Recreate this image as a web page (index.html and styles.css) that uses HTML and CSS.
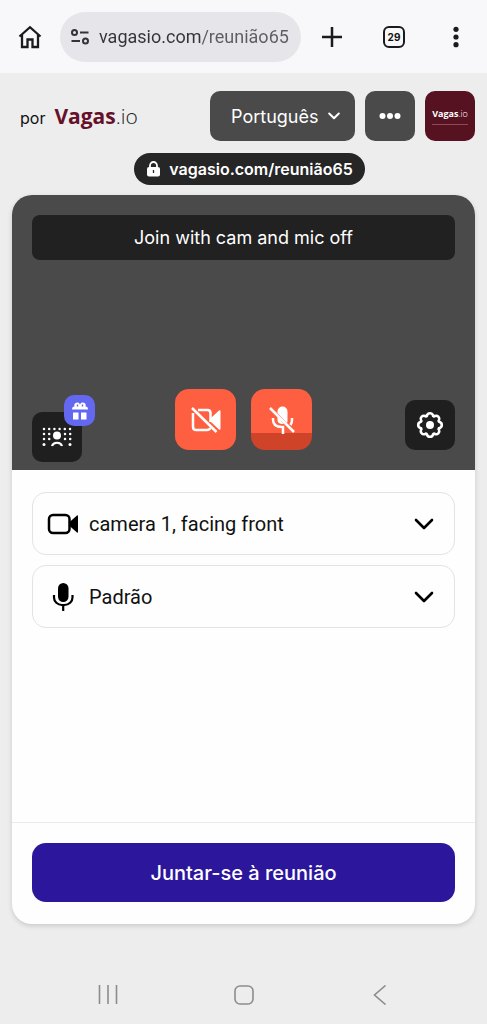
FILE: index.html
```html
<!DOCTYPE html>
<html lang="pt-BR">
<head>
<meta charset="utf-8">
<meta name="viewport" content="width=device-width, initial-scale=1">
<title>Vagas.io</title>
<link rel="stylesheet" href="styles.css">
</head>
<body>
<div class="screen">
  <header class="browser">
    <button class="browser-btn home" type="button" aria-label="Home">
      <svg width="24" height="24" viewBox="0 0 24 24" fill="none" stroke="#1b1b1d" stroke-width="2.300"><path d="M1.500 11.500 12 2.200l10.500 9.300"/><path d="M4 9.500V22h5.500v-7.500h5V22H20V9.500"/></svg>
    </button>
    <label class="address">
      <svg width="20" height="20" viewBox="0 0 20 20" fill="none" stroke="#333338" stroke-width="2"><circle cx="4.500" cy="5.500" r="2.500"/><path d="M10 5.500h8.500M1.500 14h8.500"/><circle cx="15.500" cy="14" r="2.500"/></svg>
      <input class="address-input" type="text" value="vagasio.com/reunião65" aria-label="Address">
    </label>
    <button class="browser-btn" type="button" aria-label="New tab">
      <svg width="20" height="20" viewBox="0 0 20 20" stroke="#1b1b1d" stroke-width="2.500"><path d="M10 0v20M0 10h20"/></svg>
    </button>
    <button class="browser-btn" type="button" aria-label="Tabs"><span class="tab-count">29</span></button>
    <button class="browser-btn" type="button" aria-label="Menu">
      <svg width="8" height="22" viewBox="0 0 8 22" fill="#1b1b1d"><circle cx="4" cy="3.300" r="2.600"/><circle cx="4" cy="11" r="2.600"/><circle cx="4" cy="18.700" r="2.600"/></svg>
    </button>
  </header>

  <main class="page">
    <div class="topbar">
      <p class="brand">por <span class="brand-name"><b>Vagas</b>.io</span></p>
      <div class="picker language">
        <select class="picker-select" aria-label="Idioma"><option>Português</option></select>
        <svg class="picker-arrow" width="12" height="8" viewBox="0 0 12 8" fill="none" stroke="#fff" stroke-width="2" stroke-linecap="round" stroke-linejoin="round"><path d="m1.200 1.500 4.800 4.800 4.800-4.800"/></svg>
      </div>
      <button class="square grey" type="button" aria-label="Mais opções">
        <svg width="22" height="8" viewBox="0 0 22 8" fill="#fff"><circle cx="3.500" cy="4" r="3"/><circle cx="11" cy="4" r="3"/><circle cx="18.500" cy="4" r="3"/></svg>
      </button>
      <button class="square maroon" type="button">
        <span class="tile-name"><b>Vagas</b>.io</span>
        <span class="tile-line"></span>
      </button>
    </div>

    <a class="room-link" href="#">
      <svg width="15" height="16" viewBox="0 0 15 16"><path d="M4 7V4.500a3.500 3.500 0 0 1 7 0V7" fill="none" stroke="#fff" stroke-width="1.800"/><rect x="1" y="6" width="13" height="9.500" rx="2" fill="#fff"/><path d="M7.500 9v3" stroke="#262626" stroke-width="1.300"/></svg>
      vagasio.com/reunião65
    </a>

    <section class="card">
      <div class="video">
        <button class="join-off" type="button">Join with cam and mic off</button>
        <div class="controls">
          <button class="square dark background" type="button" aria-label="Plano de fundo">
            <svg width="30" height="22" viewBox="0 0 30 22" fill="#fff">
              <g stroke="#fff" stroke-width="2.500" stroke-linecap="round" stroke-dasharray="0 5.200"><path d="M2 3h26.100M2 8h7M23 8h6M2 13h7M23 13h6"/></g>
              <circle cx="2" cy="18.500" r="1.500"/><circle cx="28" cy="18.500" r="1.500"/>
              <circle cx="15" cy="9.500" r="4"/><path d="M10 20a5.200 4.500 0 0 1 10 0" fill="none" stroke="#fff" stroke-width="2.200"/>
            </svg>
            <span class="gift">
              <svg width="18" height="20" viewBox="0 0 18 20" fill="#fff"><path d="M3.500 5.500a2.600 2.600 0 0 1 5.500-2 2.600 2.600 0 0 1 5.500 2q2.500 0 2.500 3H1q0-3 2.500-3"/><path d="M6.500 3.500v2M11.500 3.500v2" stroke="#5d60e8" stroke-width="1.400"/><rect x="2" y="11.500" width="5.500" height="7"/><rect x="10" y="11.500" width="5.500" height="7"/></svg>
            </span>
          </button>
          <div class="toggles">
            <button class="toggle" type="button" aria-label="Ligar câmera">
              <svg width="32" height="28" viewBox="0 0 32 28" fill="none" stroke="#fff" stroke-width="2.500"><path d="M8 4h9.500q3 0 3 3v9M3 7v13.500Q3 24 6 24h11q2.500 0 3.300-2"/><path d="m21 12 8-7.500q1.500-1 1.500 1v17q0 2-1.500 1L21 16z" fill="#fff" stroke="none"/><path d="m2 2 24.500 24"/></svg>
            </button>
            <button class="toggle level" type="button" aria-label="Ligar microfone">
              <svg width="26" height="28" viewBox="0 0 26 28" fill="none" stroke="#fff" stroke-width="2.500"><path d="M8.500 7V5.500a5 5 0 0 1 10 0V15q0 1-.6 2z" fill="#fff" stroke="none"/><path d="m8.500 10.500 6.300 7.500q-6.300.5-6.300-4z" fill="#fff" stroke="none"/><path d="M4 12v1.500c0 5 3.500 7.500 9 7.500h1v7M23 12v2q0 3-1.500 5"/><path d="m1 2 24 24"/></svg>
            </button>
          </div>
          <button class="square dark settings" type="button" aria-label="Configurações">
            <svg width="30" height="30" viewBox="0 0 30 30" fill="none" stroke="#fff" stroke-width="2.600" stroke-linejoin="round"><path d="M12 5.300a3.200 3.200 0 0 1 6 0 1 1 0 0 0 1.800.7 3.200 3.200 0 0 1 4.200 4.200 1 1 0 0 0 .7 1.800 3.200 3.200 0 0 1 0 6 1 1 0 0 0-.7 1.800 3.200 3.200 0 0 1-4.200 4.200 1 1 0 0 0-1.800.7 3.200 3.200 0 0 1-6 0 1 1 0 0 0-1.800-.7A3.200 3.200 0 0 1 6 19.800 1 1 0 0 0 5.300 18a3.200 3.200 0 0 1 0-6A1 1 0 0 0 6 10.200 3.200 3.200 0 0 1 10.200 6 1 1 0 0 0 12 5.300z"/><circle cx="15" cy="15" r="4" fill="#fff" stroke="none"/></svg>
          </button>
        </div>
      </div>

      <div class="devices">
        <div class="picker device">
          <svg class="device-icon" width="32" height="24" viewBox="0 0 32 24"><rect x="2" y="3" width="20.500" height="18" rx="4" fill="none" stroke="#000" stroke-width="2.500"/><path d="m22 10.500 8-7q1-.5 1 .7v15.600q0 1.200-1 .7l-8-7z"/></svg>
          <select class="picker-select" aria-label="Câmera"><option>camera 1, facing front</option></select>
          <svg class="picker-arrow" width="20" height="12" viewBox="0 0 20 12" fill="none" stroke="#000" stroke-width="2.600" stroke-linecap="round" stroke-linejoin="round"><path d="m2 2 8 8 8-8"/></svg>
        </div>
        <div class="picker device">
          <svg class="device-icon" width="32" height="28" viewBox="0 0 32 28"><rect x="11" y="0" width="10.500" height="19" rx="5.250"/><path d="M7 12v2.500a8 7.500 0 0 0 8 7.500h2.500a8 7.500 0 0 0 8-7.500V12M16.200 22v6" fill="none" stroke="#000" stroke-width="2.200"/></svg>
          <select class="picker-select" aria-label="Microfone"><option>Padrão</option></select>
          <svg class="picker-arrow" width="20" height="12" viewBox="0 0 20 12" fill="none" stroke="#000" stroke-width="2.600" stroke-linecap="round" stroke-linejoin="round"><path d="m2 2 8 8 8-8"/></svg>
        </div>
      </div>

      <div class="card-footer">
        <button class="join" type="button">Juntar-se à reunião</button>
      </div>
    </section>
  </main>

  <nav class="system">
    <button class="system-btn" type="button" aria-label="Recentes"><svg width="20" height="20" viewBox="0 0 20 20" stroke="#8c8c8f" stroke-width="1.600"><path d="M1.500 0v19M10 0v19M18.500 0v19"/></svg></button>
    <button class="system-btn" type="button" aria-label="Início"><svg width="20" height="20" viewBox="0 0 20 20" fill="none" stroke="#8c8c8f" stroke-width="1.600"><rect x="1" y="1" width="18" height="18" rx="5"/></svg></button>
    <button class="system-btn" type="button" aria-label="Voltar"><svg width="20" height="20" viewBox="0 0 20 20" fill="none" stroke="#8c8c8f" stroke-width="1.600"><path d="M15.500.5 4.500 10l11 9.500"/></svg></button>
  </nav>
</div>
</body>
</html>
```

FILE: styles.css
```css
* {
  box-sizing: border-box;
}

body {
  margin: 0;
  background: #ededee;
  color: #111;
  font-family: Inter, "Liberation Sans", sans-serif;
  font-size: 18px;
}

button,
input,
select {
  margin: 0;
  padding: 0;
  border: 0;
  background: none;
  color: inherit;
  font: inherit;
}

svg {
  display: block;
  flex: none;
}

.screen {
  display: flex;
  flex-direction: column;
  min-height: 100vh;
}

.browser {
  display: flex;
  align-items: center;
  height: 73px;
  background: #f8f8fa;
}

.browser-btn {
  display: grid;
  place-items: center;
  width: 62px;
  height: 48px;
}

.home {
  width: 60px;
}

.address {
  display: flex;
  flex: 1;
  align-items: center;
  gap: 9px;
  min-width: 0;
  height: 50px;
  padding: 0 8px 0 10px;
  border-radius: 25px;
  background: #e6e6ea;
}

.address-input {
  flex: 1;
  min-width: 0;
  background: linear-gradient(90deg, #333338 102px, #5c5c62 102px);
  background-clip: text;
  font-family: Roboto, sans-serif;
  font-size: 18px;
  -webkit-text-fill-color: transparent;
}

.tab-count {
  display: grid;
  place-items: center;
  width: 22px;
  height: 22px;
  border: 2px solid #1b1b1d;
  border-radius: 6px;
  font-size: 10px;
  font-weight: 700;
}

.page {
  display: flex;
  flex: 1;
  flex-direction: column;
  align-items: center;
  padding: 18px 12px 42px;
}

.topbar {
  display: flex;
  align-items: center;
  gap: 10px;
  width: 100%;
  margin-bottom: 12px;
}

.brand {
  display: flex;
  flex: 1;
  align-items: baseline;
  gap: 9px;
  margin: 0;
  padding-left: 8px;
  font-size: 16px;
}

.brand-name {
  color: #222;
  font-family: "Open Sans", sans-serif;
  font-size: 21px;
  font-weight: 300;
}

.brand-name b {
  color: #66102a;
  font-weight: 700;
}

.picker {
  display: grid;
  align-items: center;
}

.picker-select {
  grid-area: 1 / 1;
  width: 100%;
  height: 100%;
  appearance: none;
}

.picker-arrow {
  grid-area: 1 / 1;
  justify-self: end;
  pointer-events: none;
}

.language {
  width: 145px;
  height: 50px;
  border-radius: 10px;
  background: #4a4a4a;
  color: #fff;
}

.language .picker-select {
  padding-left: 21px;
}

.language .picker-arrow {
  margin-right: 15px;
}

.square {
  display: grid;
  place-items: center;
  width: 50px;
  height: 50px;
  border-radius: 10px;
}

.grey {
  background: #4a4a4a;
}

.maroon {
  place-content: center;
  gap: 3px;
  background: #561220;
  color: #fff;
}

.tile-name {
  font-family: "Open Sans", sans-serif;
  font-size: 9px;
  font-weight: 300;
  line-height: 14px;
}

.tile-name b {
  font-weight: 700;
}

.tile-line {
  width: 36px;
  height: 1px;
  background: #8d4954;
}

.room-link {
  display: flex;
  align-items: center;
  gap: 8px;
  height: 32px;
  margin: 0 0 10px 12px;
  padding: 0 12px;
  border-radius: 16px;
  background: #262626;
  color: #fff;
  font-size: 16px;
  font-weight: 600;
  text-decoration: none;
}

.card {
  display: flex;
  flex: 1;
  flex-direction: column;
  width: 100%;
  overflow: hidden;
  border-radius: 20px;
  background: #fefefe;
  box-shadow: 0 2px 5px #00000026;
}

.video {
  display: flex;
  flex-direction: column;
  justify-content: space-between;
  height: 275px;
  padding: 20px 20px 8px;
  background: #4a4a4a;
  color: #fff;
}

.join-off {
  height: 45px;
  border-radius: 8px;
  background: #212121;
}

.controls {
  display: grid;
  grid-template-columns: 1fr auto 1fr;
  align-items: end;
}

.dark {
  background: #1f1f1f;
}

.background {
  position: relative;
}

.gift {
  position: absolute;
  top: -17px;
  right: -13px;
  display: grid;
  place-items: center;
  width: 31px;
  height: 31px;
  border-radius: 10px;
  background: #6468f0;
}

.toggles {
  display: flex;
  gap: 15px;
  margin-bottom: 12px;
}

.toggle {
  display: grid;
  place-items: center;
  width: 61px;
  height: 61px;
  border-radius: 14px;
  background: #ff5f41;
}

.level {
  background: linear-gradient(#ff5f41 44px, #cf4329 44px);
}

.settings {
  justify-self: end;
  margin-bottom: 12px;
}

.devices {
  display: grid;
  flex: 1;
  align-content: start;
  gap: 10px;
  padding: 22px 20px;
}

.device {
  height: 63px;
  border: 1px solid #e3e3e5;
  border-radius: 14px;
  font-family: Roboto, sans-serif;
  font-size: 20px;
}

.device-icon {
  grid-area: 1 / 1;
  margin-left: 14px;
  pointer-events: none;
}

.device .picker-select {
  padding-left: 56px;
}

.device .picker-arrow {
  margin-right: 20px;
}

.card-footer {
  display: grid;
  padding: 20px 20px 22px;
  border-top: 1px solid #ebebed;
}

.join {
  height: 59px;
  border-radius: 14px;
  background: #2c169c;
  color: #fff;
  font-size: 20px;
  font-weight: 500;
}

.system {
  display: flex;
  align-items: center;
  justify-content: center;
  gap: 88px;
  height: 58px;
}

.system-btn {
  display: grid;
  place-items: center;
  width: 48px;
  height: 48px;
}
```
